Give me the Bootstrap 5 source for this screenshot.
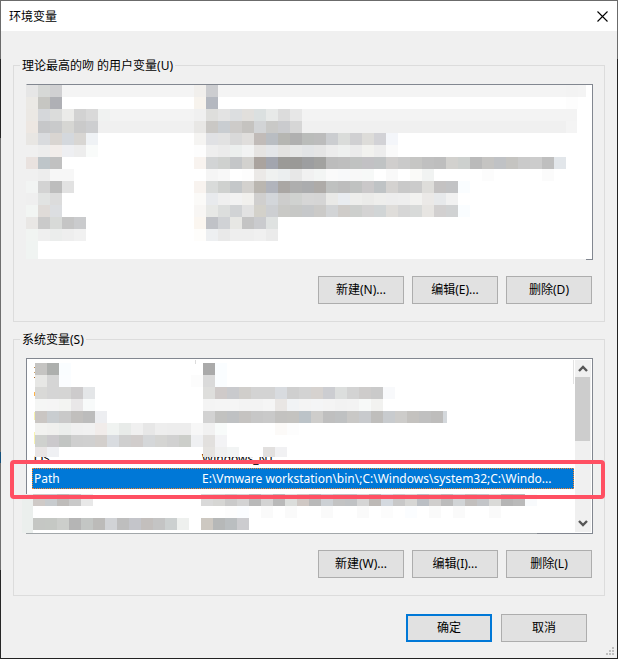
<!DOCTYPE html>
<html lang="zh-CN">
<head>
<meta charset="utf-8">
<meta name="viewport" content="width=device-width, initial-scale=1">
<title>环境变量</title>
<link href="https://cdn.jsdelivr.net/npm/bootstrap@5.3.0/dist/css/bootstrap.min.css" rel="stylesheet">
<style>
body { font: 12px/18px "Noto Sans", "Noto Sans CJK SC", sans-serif; color: #000; background: #222; }
.dialog-frame { min-height: 100vh; padding: 1px;
  background: linear-gradient(#6b6b6b 59px, #262626 59px, #262626 138px, #6f6f6f 138px, #6f6f6f 452px, #14507c 452px, #14507c 463px, #6f6f6f 463px, #6f6f6f 570px, #262626 570px) left / 1px 100% no-repeat,
    linear-gradient(#6b6b6b, #6b6b6b) top / 100% 1px no-repeat,
    linear-gradient(#6b6b6b 59px, #222 59px) right / 1px 100% no-repeat, #222; }
.dialog-body { background: #f0f0f0; }
.title-strip { height: 30px; background: #fff; padding-left: 8px; }
.cjk { font-family: "Noto Sans CJK SC", sans-serif; }
.close-x { width: 30px; height: 30px; border: 0; background: none; padding: 0; }
.groups { padding: 24px 12px 0; }
.var-group { border: 1px solid #dcdcdc; padding: 0 11px 17px 12px; margin: 0 0 7px; }
.var-group legend { float: none; width: auto; font-size: 12px; line-height: 18px; margin: 0 0 9px -6px; padding: 2px 2px 0; }
.var-list { height: 176px; background: #fff; border: 1px solid #828790; }
.var-list.first { border-left-color: transparent; border-bottom-color: #f0f0f0; background-clip: padding-box; }
.mosaic { left: -1px; top: -1px; overflow: visible; pointer-events: none; }
.corner { right: -1px; bottom: -1px; width: 7px; height: 1px; background: #828790; }
.var-table { table-layout: fixed; width: calc(100% - 23px); margin-left: 5px; border-collapse: separate; border-spacing: 0; }
.var-table td { height: 19px; padding: 0 2px; line-height: 18px; white-space: nowrap; overflow: hidden; text-overflow: ellipsis; }
.var-table td:first-child { width: 168px; }
.var-table tr.hidden-rows td { height: 90px; }
.var-table tr.picked { outline: 1px dotted #ff8728; outline-offset: -1px; }
.var-table tr.picked td { height: 21px; background: #0078d7; color: #fff; }
.ring { left: -17px; right: -13px; top: 101px; height: 39px; border: 4px solid #ff5063; border-radius: 4px; }
.scroll { right: 1px; top: 1px; bottom: 1px; width: 16px; background: #f0f0f0; }
.thumb { height: 64px; width: 15px; background: #cdcdcd; }
.var-btn { width: 86px; height: 28px; padding: 0; border: 1px solid #adadad; border-radius: 0; background: #e1e1e1; font-size: 12px; line-height: 18px; color: #000; }
.var-btn.main { border: 2px solid #0078d7; }
.tools { gap: 8px; margin-top: 16px; padding-right: 1px; }
.finish { gap: 9px; padding: 11px 30px 0 0; }
.grip-row { height: 16px; padding-right: 3px; }
</style>
<script src="https://cdn.jsdelivr.net/npm/bootstrap@5.3.0/dist/js/bootstrap.bundle.min.js"></script>
</head>
<body>
<main class="dialog-frame d-flex flex-column">
<div class="dialog-body flex-grow-1 d-flex flex-column">
  <header class="title-strip d-flex align-items-center justify-content-between">
    <span class="cjk">环境变量</span>
    <button type="button" class="close-x" aria-label="关闭"><svg width="11" height="11" viewBox="0 0 11 11"><path d="M.5.5l10 10M10.500.5l-10 10" stroke="#000" stroke-width="1.1"/></svg></button>
  </header>
  <div class="groups">
    <fieldset class="var-group">
      <legend>理论最高的吻 的用户变量(U)</legend>
      <div class="var-list first position-relative">
        <svg id="userMosaic" class="mosaic position-absolute" width="560" height="176" aria-hidden="true"></svg>
        <div class="corner position-absolute"></div>
      </div>
      <div class="tools d-flex justify-content-end">
        <button type="button" class="var-btn">新建(N)...</button>
        <button type="button" class="var-btn">编辑(E)...</button>
        <button type="button" class="var-btn">删除(D)</button>
      </div>
    </fieldset>
    <fieldset class="var-group">
      <legend>系统变量(S)</legend>
      <div class="var-list position-relative">
        <table class="var-table">
          <tbody>
            <tr class="hidden-rows"><td></td><td></td></tr>
            <tr><td>OS</td><td>Windows_NT</td></tr>
            <tr class="picked"><td>Path</td><td>E:\Vmware workstation\bin\;C:\Windows\system32;C:\Windo...</td></tr>
          </tbody>
        </table>
        <svg id="systemMosaic" class="mosaic position-absolute" width="550" height="176" aria-hidden="true"></svg>
        <div class="scroll position-absolute d-flex flex-column">
          <svg width="16" height="17" viewBox="0 0 16 17"><path d="M4 11l4-4 4 4" fill="none" stroke="#555" stroke-width="2.4"/></svg>
          <div class="thumb"></div>
          <svg class="mt-auto" width="16" height="17" viewBox="0 0 16 17"><path d="M4 6l4 4 4-4" fill="none" stroke="#555" stroke-width="2.4"/></svg>
        </div>
        <div class="ring position-absolute"></div>
      </div>
      <div class="tools d-flex justify-content-end">
        <button type="button" class="var-btn">新建(W)...</button>
        <button type="button" class="var-btn">编辑(I)...</button>
        <button type="button" class="var-btn">删除(L)</button>
      </div>
    </fieldset>
  </div>
  <div class="finish d-flex justify-content-end">
    <button type="button" class="var-btn main">确定</button>
    <button type="button" class="var-btn">取消</button>
  </div>
  <div class="grip-row d-flex justify-content-end align-items-end mt-auto">
    <svg width="8" height="12" viewBox="0 0 8 12" fill="#bfbfbf"><path d="M6 1h2v2H6zM3 4h2v2H3zM6 4h2v2H6zM0 7h2v2H0zM3 7h2v2H3zM6 7h2v2H6z"/></svg>
  </div>
</div>
</main>
<script>
const CELL = 12;
function block(svg, x, y, w, h, fill) {
  const r = document.createElementNS('http://www.w3.org/2000/svg', 'rect');
  Object.entries({ x, y, width: w, height: h, fill }).forEach(([k, v]) => r.setAttribute(k, v));
  svg.append(r);
}
// Each entry is [row, first column, colours]; a two-digit colour is a grey level.
function tiles(svg, x0, y0, rows) {
  for (const [row, col, colours] of rows)
    colours.split(' ').forEach((c, i) =>
      block(svg, x0 + (col + i) * CELL, y0 + row * CELL, CELL, CELL, '#' + (c.length === 2 ? c + c + c : c)));
}
const user = document.getElementById('userMosaic');
block(user, 36, 1, 524, 12, '#f4f4f4');
block(user, 540, 1, 12, 24, '#f2f2f220');
block(user, 72, 25, 479, 12, '#f3f3f3');
block(user, 72, 37, 468, 12, '#f0f0f0');
block(user, 540, 37, 11, 12, '#f4f4f4');
tiles(user, 0, 1, [
  [0, 0, 'e6 d6d8d6 d0d0d2'], [0, 14, 'f1efec cccdd0'],
  [1, 0, 'ebe9e5 c6c6c2 afb0b5'], [1, 14, 'f7f3ed b4b8c0'],
  [2, 0, 'ebe8e4 d5d7da dbdcdb ebebe9 d2 d9 f0f2f1'], [2, 14, 'f0 dededc e3 dcdee0 e1dfdc dbe0e0 e7e9e8 dc e7'],
  [3, 0, 'ede7e2 c6c7c9 c9cacb d6d6d3 ca cdced0'], [3, 14, 'e8e7e5 cac8c5 c9cdd1 cdcbc9 c5c3c0 d2d4d6 c9c9c7 cacbce d6'],
  [4, 0, 'e8e6e3 d9dbde d9d5d1 d4d8dd d8d6d3 eff2f5'], [4, 14, 'f5f4f2 e0e1e4 e2 d9 e0dedc c1bbb8 b9bdc2 b6b6b2 b0 babcba bc cbcdd0 dadcda d0d0d2 dddcd9 d2d2d6 f4f6fa'],
  [5, 0, 'f0 ed f2edea eeeff2 ed f9fbfa'], [5, 14, 'fd ee eb ecefee f2f3f3 e6e4e2 e4e6e9 e3e2e0 e6e7e7 e2e4e6 e5 ec eef0ef eb f2f2ef ed fa'],
  [6, 0, 'e9e2df bec5c9 c1'], [6, 14, 'f8f3ef d2d4d5 cfd1cf c4c6c8 d2d1ce aaa39e a2a5ae 9b9a97 9a9997 9d9ea0 a2a2a0 bc be c0c2c1 c2c1c4 c0c3c4 d0cecd ca c6c6c4 c0 be d2d1ce cdd0ce ba c5c4c2 c0c2c5 c5c4c1 ca cc bf e2e6ea'],
  [7, 0, 'f0 ed f7 f7'], [7, 15, 'f5 f8 ff fd ebe9e7 eff1f0 ebeeef e7 f1 f3f5f4 fa f8f9fa f8 f7f9f8 ff f9'], [7, 32, 'fafaf8 f1f3f2'], [7, 38, 'fc'], [7, 43, 'fb'],
  [8, 0, 'f2f4f3 d3 bd e2'], [8, 14, 'f8f3ef d9dbda cfd1cf c4c7c9 d3d1ce bab6b0 b1b4bc aaa7a4 ae abacae aeaba8 bfc1c0 bd c0c2c1 cac8c9 bfc3c5 d4d2d0 c9 cb deddda c4c2c2 c2c3c5 fafdff'],
  [9, 0, 'ef e1e3e2 dc'], [9, 14, 'fbfaf8 e8eaed ef f2 f1f0ed d0cfce d3d6da cdcdcc d0d2d0 d6 d5 e9e9e7 e9ecf0 eeeeec ebebe9 eeeeec ed ee f2f2f0 ebe9e7 e7e9eb f1'],
  [10, 0, 'f2f5f3 dfdbd8 dcdee1'], [10, 14, 'f8f6f4 e7e8e6 dcdedd d1d3d5 e2 d3d1ca cdcfd2 c9c9c6 c7c8c6 c6c8ca cbcac8 d2d4d6 cfccc9 cdcfcd d4d3d3 d1d5d6 dfddda d6 d8dad9 e7e5e2 d2d0d0 d0d2d3 fafdff'],
  [11, 0, 'e9e7e5 ca d8dad8 c5 cacbcd'], [11, 14, 'fbf6f0 c0c2c7 d0d2d5 e7e7e4 c4 cacbce dfe2e1'],
  [12, 0, 'f1f4f2 ef ebedec ee f1'], [12, 14, 'fefdfb edeff1 e9 ee ee f0 eb'],
  [13, 0, 'f0f4f2']
]);
block(user, 0, 169, 12, 6, '#f0f4f2');

const system = document.getElementById('systemMosaic');
block(system, 169, 2, 1, 4, '#dcdcdc');
block(system, 547, 2, 1, 24, '#e2e2e2');
[[9, '#c08a4a'], [14, '#c9a06a'], [19, '#b06a28']].forEach(([y, c]) => block(system, 8, y, 1, 1, c));
block(system, 8, 34, 1, 4, '#ffb347');
block(system, 8, 54, 1, 8, '#f8f3b0');
block(system, 8, 74, 1, 12, '#f8f3b0');
tiles(system, 9, 5, [
  [0, 0, 'c5c4c2 adafad fafdff'], [0, 14, 'aa fafdff'],
  [1, 0, 'e7e7e5 d5 fbfdff'], [1, 13, 'fc da fafdff'],
  [2, 0, 'd9d9d7 d5 d5d5d4 cdcbcc e4e6e8'], [2, 14, 'dededc cfcac9 c9cacd d0cecb d3 d3 d8dbdf cf d3 d6d2cf cccdd1 dcdedd d3 cecccb ca f8f9fb'],
  [3, 0, 'f5f6f5 f5 f3f4f2 e9e7e8 f8fafa'], [3, 14, 'f4 f5 f5 f3 f3 f5 e9e6e4 f1f3f5 f4 f4f5f6 f4 f2 f3 f7f9f8 f2f2f0'],
  [4, 0, 'cac6c3 c9cdd0 c9 c1bfbd bc edeef1'], [4, 14, 'd2 c2c2c0 bfc1c3 c5c3c1 c7 c9 c3c2c0 c4c3c0 bcc3c8 cecdcb bf bfc1c2 c9c8c6 c8cacd bfbebc c8cbce cdccca c4c2bf c0 bebdbc'],
  [5, 0, 'f2f2f0 f0f0ee ebeeec f0 f1 f1ecea f0f3f1 e8ebe9 f0 e7 ee ed ed f7 f1 f8fbfa'], [5, 20, 'fcfaf8 fd'],
  [6, 0, 'cfd1ce cbc9cc c2c5c3 cf d0 d3cfcc d9dce0 cf d1cdcc d5d7d9 d5d5d3 d1 ccceca eff0f2 e2e0de f3f3f5']
]);
block(system, 417, 53, 4, 12, '#d4d8dc');
['#e9e5e5', '#eff0f3'].forEach((c, i) => block(system, 9 + i * CELL, 89, CELL, 10, c));
['#e5e3e0', '#f0f0f0', '#f2f4f4', '#fff', '#fff', '#e2e0df', '#f1f1f3'].forEach((c, i) => block(system, 177 + i * CELL, 89, CELL, 10, c));
block(system, -4, 136, 11, 39, '#ebefed');
block(system, 0, 175, 511, 1, '#a2a7aa');
tiles(system, 7, 136, [
  [0, 0, 'cfcac7 c7cbce bebcba c9 e8'], [0, 14, 'd9 d6d6d4 ca d3 b9 d3 b9 dbdddb cfc8c4 b9 ccd0d4 c3 c0c2c4 d5 bdb9b6 d4d9df c8 d6d6d4 bbbfc4 d0cecd bc d1d4d6 c2bfbd c3c5c8 dadad8 b5 ba f8fafc'],
  [1, 16, 'fd fbfdff ff fa ff fa ff ff fa ff ff fa ff fc ff fbfdff ff fa ff fa ff ff fa']
]);
tiles(system, 7, 160, [
  [0, 0, 'c5c7c4 c5c8c4 cccecb b5 c3c6c4 bcbbb9 d1d3d6 be c4c5ca c3bfbd c4 ccd0d0 eef0ee'], [0, 14, 'cdc8c1 b6b8b8 babec0 cccccf']
]);
</script>
</body>
</html>
